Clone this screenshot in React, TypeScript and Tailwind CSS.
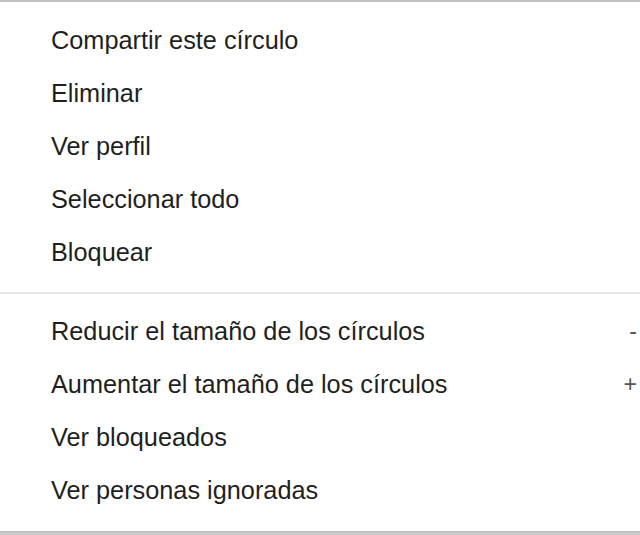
const topItems = ["Compartir este círculo", "Eliminar", "Ver perfil", "Seleccionar todo", "Bloquear"];

const bottomItems: { label: string; shortcut?: string }[] = [
  { label: "Reducir el tamaño de los círculos", shortcut: "-" },
  { label: "Aumentar el tamaño de los círculos", shortcut: "+" },
  { label: "Ver bloqueados" },
  { label: "Ver personas ignoradas" },
];

const MenuItem = ({ label, shortcut }: { label: string; shortcut?: string }) => (
  <div className="flex items-center justify-between h-[53px] pl-[51px] pr-[3px]">
    <span className="text-[25.3px] leading-none text-[#1f1f1f]">{label}</span>
    {shortcut && <span className="text-[23px] leading-none text-[#555]">{shortcut}</span>}
  </div>
);

export default function App() {
  return (
    <div className="w-[640px] h-[535px] bg-white overflow-hidden flex flex-col font-['Liberation_Sans',Arial,sans-serif]">
      <div className="h-[2px] bg-[#c2c2c2]" />
      <div className="pt-[12px] pb-[13px]">
        {topItems.map((item) => (
          <MenuItem key={item} label={item} />
        ))}
      </div>
      <div className="h-[2px] bg-[#e6e6e6]" />
      <div className="pt-[11px]">
        {bottomItems.map((item) => (
          <MenuItem key={item.label} label={item.label} shortcut={item.shortcut} />
        ))}
      </div>
      <div className="mt-auto h-[4px] bg-[#c9c9c9] border-t border-[#bdbdbd]" />
    </div>
  );
}
